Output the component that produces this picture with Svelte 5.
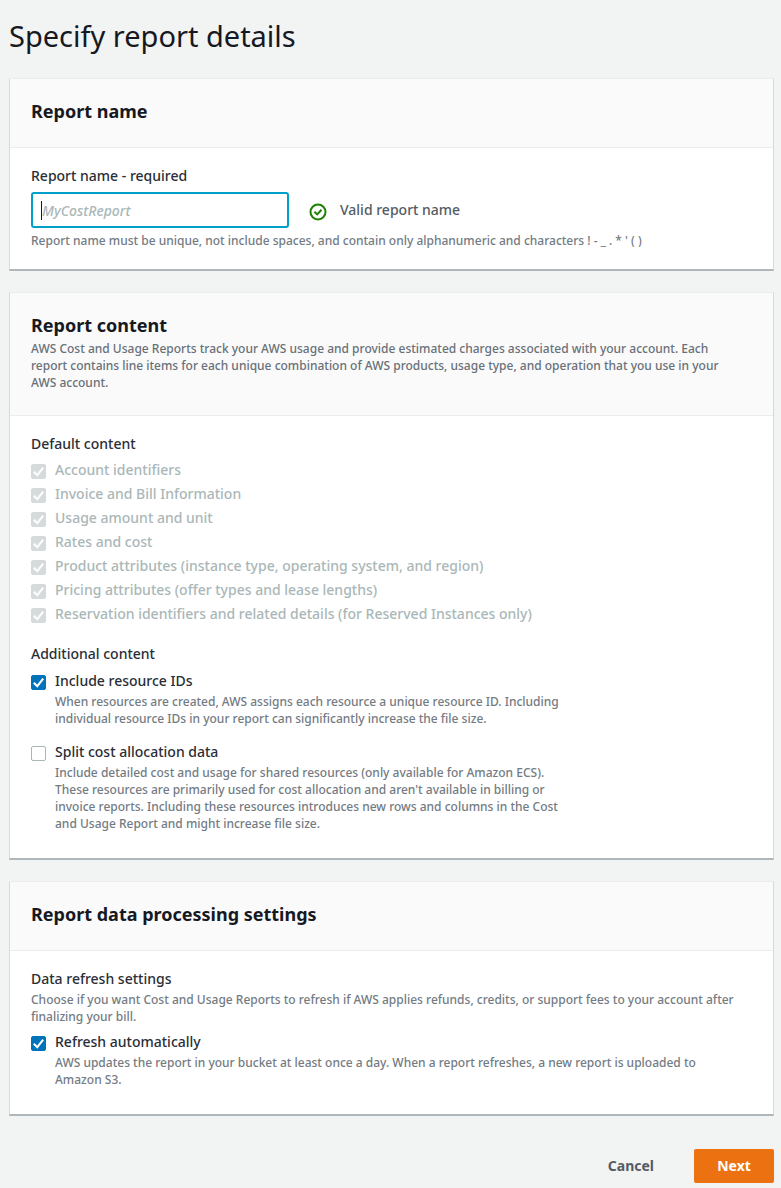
<script>
  let reportName = $state('');
  let resourceIds = $state(true);
  let splitCost = $state(false);
  let autoRefresh = $state(true);

  const defaults = [
    'Account identifiers',
    'Invoice and Bill Information',
    'Usage amount and unit',
    'Rates and cost',
    'Product attributes (instance type, operating system, and region)',
    'Pricing attributes (offer types and lease lengths)',
    'Reservation identifiers and related details (for Reserved Instances only)'
  ];
</script>

{#snippet tick()}
  <svg class="tick" viewBox="0 0 16 16" aria-hidden="true">
    <path d="M3 8.2 6.7 12 13 3.8" fill="none" stroke="#fff" stroke-width="2.2" />
  </svg>
{/snippet}

<main>
  <h1>Specify report details</h1>

  <section class="card">
    <header><h2>Report name</h2></header>
    <div class="body">
      <label class="title" for="report-name">Report name - required</label>
      <div class="field">
        <div class="entry">
          <input id="report-name" type="text" placeholder="MyCostReport" bind:value={reportName} />
          {#if !reportName}<span class="caret"></span>{/if}
        </div>
        <div class="status">
          <svg viewBox="0 0 18 18" width="18" height="18" fill="none" stroke="#1d8102" stroke-width="2" aria-hidden="true">
            <circle cx="9" cy="9" r="7.5" />
            <path d="M5.4 8.8 8.2 11.4 12.5 6.8" />
          </svg>
          <span>Valid report name</span>
        </div>
      </div>
      <p class="hint">Report name must be unique, not include spaces, and contain only alphanumeric and characters ! - _ . * ' ( )</p>
    </div>
  </section>

  <section class="card">
    <header>
      <h2>Report content</h2>
      <p class="desc">
        AWS Cost and Usage Reports track your AWS usage and provide estimated charges associated with your account. Each<br />
        report contains line items for each unique combination of AWS products, usage type, and operation that you use in your<br />
        AWS account.
      </p>
    </header>
    <div class="body content">
      <h3 class="title">Default content</h3>
      <ul>
        {#each defaults as item}
          <li>
            <label class="check disabled">
              <span class="box"><input type="checkbox" checked disabled />{@render tick()}</span>
              <span>{item}</span>
            </label>
          </li>
        {/each}
      </ul>
      <h3 class="title">Additional content</h3>
      <div class="option">
        <label class="check">
          <span class="box"><input type="checkbox" bind:checked={resourceIds} aria-describedby="ids-desc" />{@render tick()}</span>
          <span>Include resource IDs</span>
        </label>
        <p class="desc" id="ids-desc">
          When resources are created, AWS assigns each resource a unique resource ID. Including<br />
          individual resource IDs in your report can significantly increase the file size.
        </p>
      </div>
      <div class="option">
        <label class="check">
          <span class="box"><input type="checkbox" bind:checked={splitCost} aria-describedby="split-desc" />{@render tick()}</span>
          <span>Split cost allocation data</span>
        </label>
        <p class="desc" id="split-desc">
          Include detailed cost and usage for shared resources (only available for Amazon ECS).<br />
          These resources are primarily used for cost allocation and aren't available in billing or<br />
          invoice reports. Including these resources introduces new rows and columns in the Cost<br />
          and Usage Report and might increase file size.
        </p>
      </div>
    </div>
  </section>

  <section class="card">
    <header><h2>Report data processing settings</h2></header>
    <div class="body content">
      <h3 class="title">Data refresh settings</h3>
      <p class="desc">
        Choose if you want Cost and Usage Reports to refresh if AWS applies refunds, credits, or support fees to your account after<br />
        finalizing your bill.
      </p>
      <div class="option">
        <label class="check">
          <span class="box"><input type="checkbox" bind:checked={autoRefresh} aria-describedby="refresh-desc" />{@render tick()}</span>
          <span>Refresh automatically</span>
        </label>
        <p class="desc" id="refresh-desc">
          AWS updates the report in your bucket at least once a day. When a report refreshes, a new report is uploaded to<br />
          Amazon S3.
        </p>
      </div>
    </div>
  </section>

  <footer>
    <button type="button" class="cancel">Cancel</button>
    <button type="button" class="next">Next</button>
  </footer>
</main>

<style>
  :global(body) {
    margin: 0;
    background: #f2f3f3;
  }
  main {
    padding: 16px 7px 4px 9px;
    font-family: 'Noto Sans', 'Open Sans', sans-serif;
    font-size: 14px;
    line-height: 20px;
    font-weight: 500;
    color: #2a2e36;
  }
  h1,
  h2,
  h3,
  p,
  ul {
    margin: 0;
    padding: 0;
  }
  ul {
    list-style: none;
  }
  h1 {
    margin-bottom: 22px;
    font-size: 29px;
    line-height: 40px;
    font-weight: 400;
    color: #16191f;
  }
  .card {
    box-sizing: border-box;
    margin-bottom: 21px;
    background: #fff;
    border: 1px solid #eaeded;
    border-left-color: #d5dbdb;
    border-right-color: #d5dbdb;
    border-bottom: 2px solid #b0b7bb;
  }
  header {
    padding: 20px 21px 24px;
    background: #fafafa;
    border-bottom: 1px solid #eaeded;
  }
  h2 {
    font-size: 18px;
    line-height: 24px;
    font-weight: 700;
    color: #16191f;
  }
  .body {
    padding: 18px 21px 20px;
  }
  .content {
    padding-bottom: 26px;
  }
  .title {
    display: block;
    font-size: 14px;
    line-height: 20px;
    font-weight: 500;
  }
  .field {
    display: flex;
    align-items: center;
    gap: 20px;
    margin-top: 6px;
    margin-bottom: 4px;
  }
  .entry {
    position: relative;
    width: 258px;
  }
  .entry input {
    box-sizing: border-box;
    display: block;
    width: 100%;
    height: 36px;
    padding: 0 9px;
    border: 2px solid #00a1c9;
    border-radius: 3px;
    background: #fff;
    font: inherit;
    color: #16191f;
    outline: none;
  }
  .entry input::placeholder {
    color: #aab7b8;
    font-style: italic;
    opacity: 1;
  }
  .caret {
    position: absolute;
    left: 10px;
    top: 9px;
    width: 1px;
    height: 19px;
    background: #16191f;
  }
  .status {
    display: flex;
    align-items: center;
    gap: 13px;
    color: #545b64;
  }
  .status svg {
    margin-top: 3px;
  }
  .hint,
  .desc {
    font-size: 12px;
    line-height: 17px;
    color: #737b83;
    white-space: nowrap;
  }
  header .desc {
    margin-top: 3px;
    color: #687078;
  }
  ul {
    margin: 4px 0 18px;
  }
  li {
    padding: 2px 0;
  }
  .check {
    display: flex;
    align-items: center;
    gap: 9px;
  }
  .box {
    display: grid;
    width: 15px;
    height: 15px;
    margin-top: 3px;
  }
  .box input,
  .tick {
    grid-area: 1 / 1;
    width: 15px;
    height: 15px;
    margin: 0;
  }
  .box input {
    box-sizing: border-box;
    appearance: none;
    border: 1px solid #aab7b8;
    border-radius: 2px;
    background: #fff;
  }
  .tick {
    visibility: hidden;
    pointer-events: none;
  }
  .box input:checked {
    border-color: #0073bb;
    background: #0073bb;
  }
  .box input:checked + .tick {
    visibility: visible;
  }
  .disabled {
    color: #aab7b8;
  }
  .box input:disabled {
    border-color: #d5dbdb;
    background: #d5dbdb;
  }
  .content > .desc {
    margin-top: 2px;
  }
  .option {
    margin-top: 7px;
  }
  .option + .option {
    margin-top: 15px;
  }
  .option .desc {
    margin-top: 2px;
    padding-left: 24px;
  }
  footer {
    display: flex;
    justify-content: flex-end;
    gap: 20px;
    margin-top: 33px;
  }
  button {
    height: 34px;
    padding: 0 20px;
    border: 0;
    border-radius: 2px;
    font: inherit;
    font-weight: 700;
  }
  .cancel {
    background: transparent;
    color: #545b64;
  }
  .next {
    min-width: 80px;
    background: #ec7211;
    color: #fff;
  }
</style>
